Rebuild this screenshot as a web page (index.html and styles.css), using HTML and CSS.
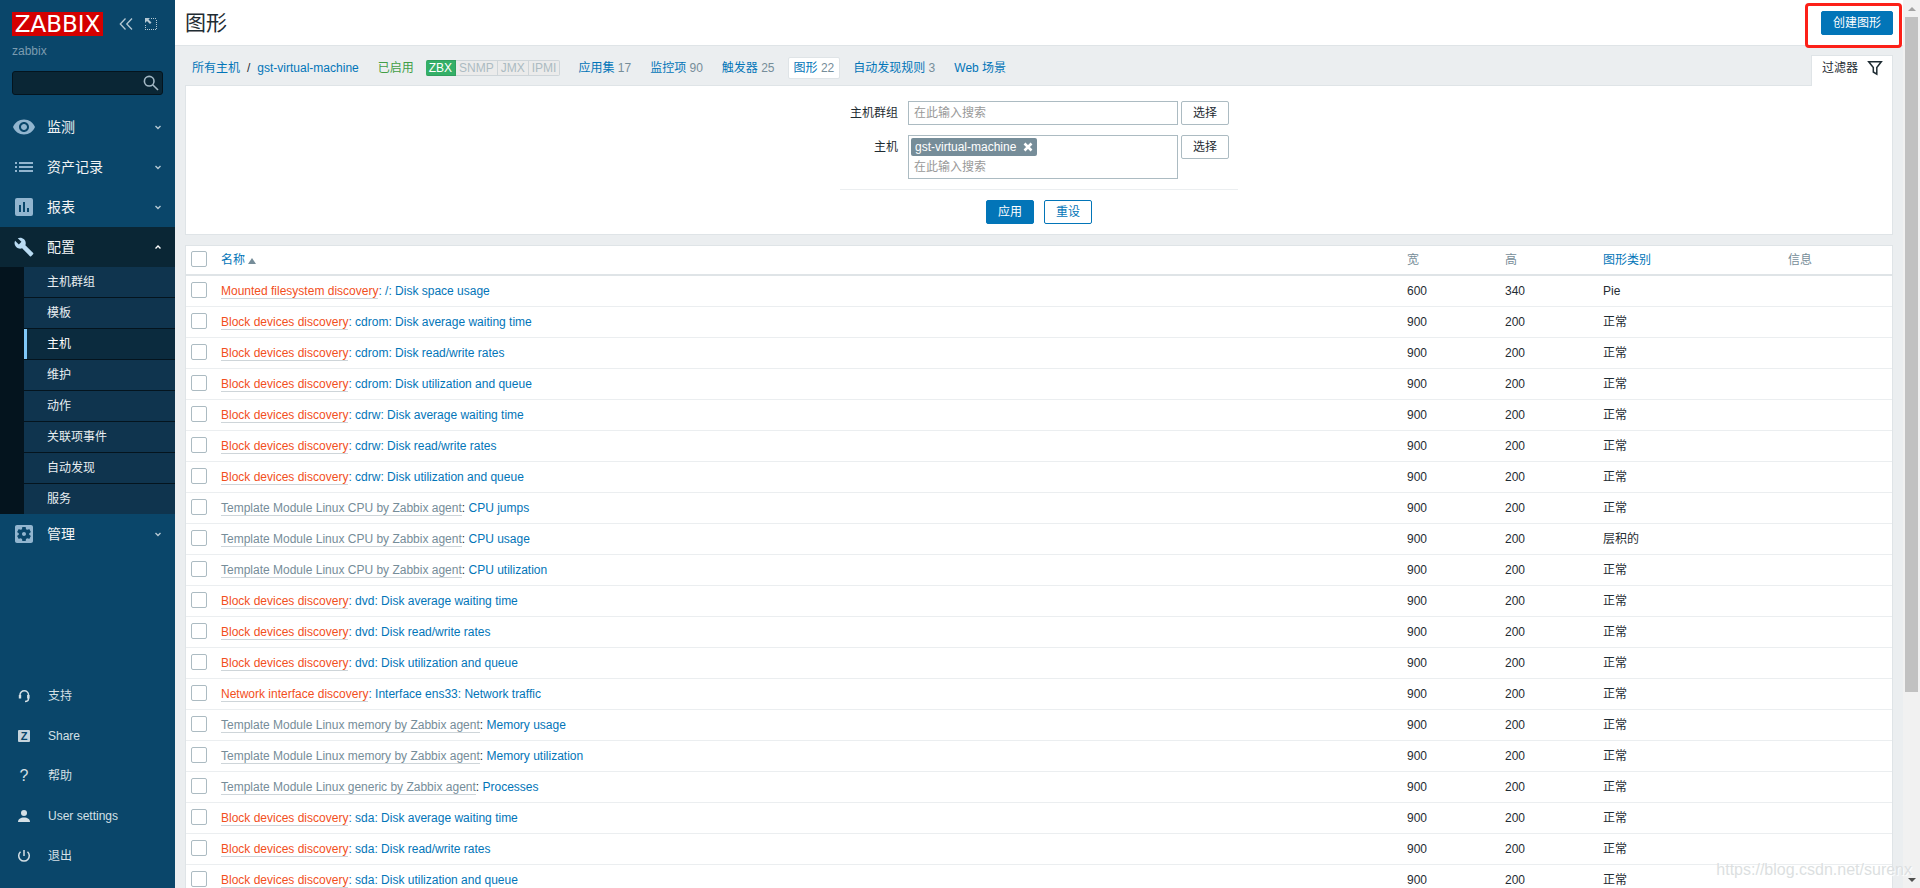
FILE: index.html
```html
<!DOCTYPE html>
<html lang="zh-CN">
<head>
<meta charset="utf-8">
<title>图形</title>
<link rel="stylesheet" href="styles.css">
</head>
<body>
<aside class="sidebar">
  <div class="brand">
    <a class="logo" href="#">ZABBIX</a>
    <button class="icon-btn" type="button" aria-label="收起侧边栏"><svg width="16" height="16" viewBox="0 0 16 16" fill="none" stroke="currentColor" stroke-width="1.3"><path d="M7.500 2.500 2.300 8l5.200 5.500M14 2.500 8.800 8l5.200 5.500"/></svg></button>
    <button class="icon-btn" type="button" aria-label="隐藏侧边栏"><svg width="14" height="14" viewBox="0 0 14 14" fill="none" stroke="currentColor"><path d="M7 1.500h6M12.500 3v10M1.500 8v5M1 12.500h12" stroke-dasharray="1 1"/><path d="M1 1h5L4.500 2.500l3 3-1.500 1.500-3-3L1 6z" fill="currentColor" stroke="none"/></svg></button>
  </div>
  <div class="server">zabbix</div>
  <form class="search">
    <input type="text" aria-label="搜索">
    <button type="button" aria-label="搜索"><svg width="16" height="16" viewBox="0 0 16 16" fill="none" stroke="currentColor" stroke-width="1.600"><circle cx="6.200" cy="6.200" r="4.800"/><path d="m9.700 9.700 5.300 5.300"/></svg></button>
  </form>
  <nav class="menu">
    <a class="menu-item" href="#"><svg class="menu-icon" viewBox="0 0 24 24"><path d="M12 4.500C7 4.500 2.730 7.610 1 12c1.730 4.390 6 7.500 11 7.500s9.270-3.110 11-7.500c-1.730-4.390-6-7.500-11-7.500zM12 17c-2.760 0-5-2.240-5-5s2.240-5 5-5 5 2.240 5 5-2.240 5-5 5zm0-8c-1.660 0-3 1.340-3 3s1.340 3 3 3 3-1.340 3-3-1.340-3-3-3z"/></svg><span>监测</span><svg class="chevron" viewBox="0 0 8 8"><path d="M1.500 3 4 5.500 6.500 3"/></svg></a>
    <a class="menu-item" href="#"><svg class="menu-icon" viewBox="0 0 24 24"><path d="M3 7h2v2H3zm4 0h14v2H7zM3 11h2v2H3zm4 0h14v2H7zM3 15h2v2H3zm4 0h14v2H7z"/></svg><span>资产记录</span><svg class="chevron" viewBox="0 0 8 8"><path d="M1.500 3 4 5.500 6.500 3"/></svg></a>
    <a class="menu-item" href="#"><svg class="menu-icon" viewBox="0 0 24 24"><path d="M19 3H5a2 2 0 0 0-2 2v14a2 2 0 0 0 2 2h14a2 2 0 0 0 2-2V5a2 2 0 0 0-2-2zM9 17H7v-7h2zm4 0h-2V7h2zm4 0h-2v-4h2z"/></svg><span>报表</span><svg class="chevron" viewBox="0 0 8 8"><path d="M1.500 3 4 5.500 6.500 3"/></svg></a>
    <a class="menu-item open" href="#"><svg class="menu-icon" viewBox="-2 -2 28 28"><path d="M22.700 19l-9.100-9.100c.9-2.300.4-5-1.500-6.900-2-2-5-2.400-7.400-1.300L9 6 6 9 1.600 4.700C.4 7.100.9 10.100 2.900 12.100c1.900 1.900 4.600 2.400 6.900 1.500l9.100 9.100c.4.4 1 .4 1.400 0l2.300-2.300c.5-.4.5-1.100.1-1.400z"/></svg><span>配置</span><svg class="chevron" viewBox="0 0 8 8"><path d="M1.500 5.500 4 3l2.500 2.500"/></svg></a>
    <div class="submenu">
      <a href="#">主机群组</a>
      <a href="#">模板</a>
      <a class="selected" href="#">主机</a>
      <a href="#">维护</a>
      <a href="#">动作</a>
      <a href="#">关联项事件</a>
      <a href="#">自动发现</a>
      <a href="#">服务</a>
    </div>
    <a class="menu-item" href="#"><svg class="menu-icon" viewBox="0 0 24 24"><path d="M12 10c-1.100 0-2 .9-2 2s.9 2 2 2 2-.9 2-2-.9-2-2-2zm7-7H5c-1.110 0-2 .9-2 2v14c0 1.100.89 2 2 2h14c1.110 0 2-.9 2-2V5c0-1.100-.89-2-2-2zm-1.750 9c0 .23-.02.46-.05.68l1.480 1.160c.13.11.17.3.08.45l-1.400 2.420c-.09.15-.27.21-.43.15l-1.740-.7c-.36.28-.76.51-1.180.69l-.26 1.850c-.03.17-.18.3-.35.3h-2.800c-.17 0-.32-.13-.35-.29l-.26-1.850c-.43-.18-.82-.41-1.180-.69l-1.740.7c-.16.06-.34 0-.43-.15l-1.400-2.420c-.09-.15-.05-.34.08-.45l1.480-1.160c-.03-.23-.05-.46-.05-.69 0-.23.02-.46.05-.68l-1.480-1.160c-.13-.11-.17-.3-.08-.45l1.400-2.420c.09-.15.27-.21.43-.15l1.740.7c.36-.28.76-.51 1.180-.69l.26-1.850c.03-.17.18-.3.35-.3h2.800c.17 0 .32.13.35.29l.26 1.850c.43.18.82.41 1.180.69l1.740-.7c.16-.06.34 0 .43.15l1.400 2.420c.09.15.05.34-.08.45l-1.480 1.160c.03.23.05.46.05.69z"/></svg><span>管理</span><svg class="chevron" viewBox="0 0 8 8"><path d="M1.500 3 4 5.500 6.500 3"/></svg></a>
  </nav>
  <nav class="user-menu">
    <a href="#"><svg viewBox="0 0 14 14" fill="none" stroke="currentColor" stroke-width="1.500"><path d="M3 9V6a4 4 0 0 1 8.500 0v3.500c0 2-1 3-3.500 3"/><path d="M3 6v3.500M11.300 6v3.500" stroke-width="2.400"/></svg><span>支持</span></a>
    <a href="#"><b class="z-badge">Z</b><span>Share</span></a>
    <a href="#"><span class="question">?</span><span>帮助</span></a>
    <a href="#"><svg viewBox="0 0 14 14" fill="currentColor"><circle cx="7" cy="4" r="3"/><path d="M1 13c0-3 2.500-4.500 6-4.500s6 1.500 6 4.500z"/></svg><span>User settings</span></a>
    <a href="#"><svg viewBox="0 0 14 14" fill="none" stroke="currentColor" stroke-width="1.500"><path d="M7 1v6M3.500 2.800a5.300 5.300 0 1 0 7 0"/></svg><span>退出</span></a>
  </nav>
</aside>

<main class="page">
  <header class="page-head">
    <h1>图形</h1>
    <div class="create-wrap"><button class="btn primary" type="button">创建图形</button></div>
  </header>
  <div class="content">
    <div class="nav-row">
      <nav class="crumbs">
        <a href="#">所有主机</a><span class="slash">/</span><a href="#">gst-virtual-machine</a>
        <span class="enabled">已启用</span>
        <span class="interfaces"><span class="on">ZBX</span><span>SNMP</span><span>JMX</span><span>IPMI</span></span>
        <span class="tabs">
          <a href="#">应用集 <sup>17</sup></a>
          <a href="#">监控项 <sup>90</sup></a>
          <a href="#">触发器 <sup>25</sup></a>
          <a class="current" href="#">图形 <sup>22</sup></a>
          <a href="#">自动发现规则 <sup>3</sup></a>
          <a href="#">Web 场景</a>
        </span>
      </nav>
      <button class="filter-tab" type="button">过滤器<svg width="16" height="16" viewBox="0 0 16 16" fill="none" stroke="currentColor" stroke-width="1.500"><path d="M1.700 1.800h12.600L9.800 7.500v6.700L6.300 12V7.500z"/></svg></button>
    </div>
    <form class="filter">
      <div class="fields">
        <div class="field">
          <label for="groups">主机群组</label>
          <div class="multiselect"><input id="groups" type="text" placeholder="在此输入搜索"></div>
          <button class="btn plain" type="button">选择</button>
        </div>
        <div class="field">
          <label for="hosts">主机</label>
          <div class="multiselect">
            <span class="tag">gst-virtual-machine<button type="button" aria-label="移除"><svg width="10" height="10" viewBox="0 0 10 10" stroke="currentColor" stroke-width="2.600"><path d="m1.500 1.500 7 7m0-7-7 7"/></svg></button></span>
            <input id="hosts" type="text" placeholder="在此输入搜索">
          </div>
          <button class="btn plain" type="button">选择</button>
        </div>
      </div>
      <div class="actions">
        <button class="btn primary" type="button">应用</button>
        <button class="btn outline" type="button">重设</button>
      </div>
    </form>
    <table class="list">
      <colgroup><col class="c-check"><col><col class="c-num"><col class="c-num"><col class="c-type"><col class="c-info"></colgroup>
      <thead><tr><th><input type="checkbox" aria-label="全选"></th><th><a href="#">名称<i class="sort"></i></a></th><th>宽</th><th>高</th><th><a href="#">图形类别</a></th><th>信息</th></tr></thead>
      <tbody>
        <tr><td><input type="checkbox" aria-label="选择"></td><td><a class="rule" href="#">Mounted filesystem discovery</a><a href="#">: /: Disk space usage</a></td><td>600</td><td>340</td><td>Pie</td><td></td></tr>
        <tr><td><input type="checkbox" aria-label="选择"></td><td><a class="rule" href="#">Block devices discovery</a><a href="#">: cdrom: Disk average waiting time</a></td><td>900</td><td>200</td><td>正常</td><td></td></tr>
        <tr><td><input type="checkbox" aria-label="选择"></td><td><a class="rule" href="#">Block devices discovery</a><a href="#">: cdrom: Disk read/write rates</a></td><td>900</td><td>200</td><td>正常</td><td></td></tr>
        <tr><td><input type="checkbox" aria-label="选择"></td><td><a class="rule" href="#">Block devices discovery</a><a href="#">: cdrom: Disk utilization and queue</a></td><td>900</td><td>200</td><td>正常</td><td></td></tr>
        <tr><td><input type="checkbox" aria-label="选择"></td><td><a class="rule" href="#">Block devices discovery</a><a href="#">: cdrw: Disk average waiting time</a></td><td>900</td><td>200</td><td>正常</td><td></td></tr>
        <tr><td><input type="checkbox" aria-label="选择"></td><td><a class="rule" href="#">Block devices discovery</a><a href="#">: cdrw: Disk read/write rates</a></td><td>900</td><td>200</td><td>正常</td><td></td></tr>
        <tr><td><input type="checkbox" aria-label="选择"></td><td><a class="rule" href="#">Block devices discovery</a><a href="#">: cdrw: Disk utilization and queue</a></td><td>900</td><td>200</td><td>正常</td><td></td></tr>
        <tr><td><input type="checkbox" aria-label="选择"></td><td><a class="template" href="#">Template Module Linux CPU by Zabbix agent</a>: <a href="#">CPU jumps</a></td><td>900</td><td>200</td><td>正常</td><td></td></tr>
        <tr><td><input type="checkbox" aria-label="选择"></td><td><a class="template" href="#">Template Module Linux CPU by Zabbix agent</a>: <a href="#">CPU usage</a></td><td>900</td><td>200</td><td>层积的</td><td></td></tr>
        <tr><td><input type="checkbox" aria-label="选择"></td><td><a class="template" href="#">Template Module Linux CPU by Zabbix agent</a>: <a href="#">CPU utilization</a></td><td>900</td><td>200</td><td>正常</td><td></td></tr>
        <tr><td><input type="checkbox" aria-label="选择"></td><td><a class="rule" href="#">Block devices discovery</a><a href="#">: dvd: Disk average waiting time</a></td><td>900</td><td>200</td><td>正常</td><td></td></tr>
        <tr><td><input type="checkbox" aria-label="选择"></td><td><a class="rule" href="#">Block devices discovery</a><a href="#">: dvd: Disk read/write rates</a></td><td>900</td><td>200</td><td>正常</td><td></td></tr>
        <tr><td><input type="checkbox" aria-label="选择"></td><td><a class="rule" href="#">Block devices discovery</a><a href="#">: dvd: Disk utilization and queue</a></td><td>900</td><td>200</td><td>正常</td><td></td></tr>
        <tr><td><input type="checkbox" aria-label="选择"></td><td><a class="rule" href="#">Network interface discovery</a><a href="#">: Interface ens33: Network traffic</a></td><td>900</td><td>200</td><td>正常</td><td></td></tr>
        <tr><td><input type="checkbox" aria-label="选择"></td><td><a class="template" href="#">Template Module Linux memory by Zabbix agent</a>: <a href="#">Memory usage</a></td><td>900</td><td>200</td><td>正常</td><td></td></tr>
        <tr><td><input type="checkbox" aria-label="选择"></td><td><a class="template" href="#">Template Module Linux memory by Zabbix agent</a>: <a href="#">Memory utilization</a></td><td>900</td><td>200</td><td>正常</td><td></td></tr>
        <tr><td><input type="checkbox" aria-label="选择"></td><td><a class="template" href="#">Template Module Linux generic by Zabbix agent</a>: <a href="#">Processes</a></td><td>900</td><td>200</td><td>正常</td><td></td></tr>
        <tr><td><input type="checkbox" aria-label="选择"></td><td><a class="rule" href="#">Block devices discovery</a><a href="#">: sda: Disk average waiting time</a></td><td>900</td><td>200</td><td>正常</td><td></td></tr>
        <tr><td><input type="checkbox" aria-label="选择"></td><td><a class="rule" href="#">Block devices discovery</a><a href="#">: sda: Disk read/write rates</a></td><td>900</td><td>200</td><td>正常</td><td></td></tr>
        <tr><td><input type="checkbox" aria-label="选择"></td><td><a class="rule" href="#">Block devices discovery</a><a href="#">: sda: Disk utilization and queue</a></td><td>900</td><td>200</td><td>正常</td><td></td></tr>
      </tbody>
    </table>
  </div>
</main>

<div class="scrollbar" aria-hidden="true">
  <i class="arrow up"></i>
  <div class="track"><div class="thumb"></div></div>
  <i class="arrow down"></i>
</div>
<div class="watermark">https://blog.csdn.net/surenx</div>
</body>
</html>
```
FILE: styles.css
```css
* { box-sizing: border-box; }

body {
  margin: 0;
  height: 100vh;
  overflow: hidden;
  display: flex;
  background: #ebeef0;
  color: #1f2c33;
  font: 12px/16px "Liberation Sans", "Noto Sans CJK SC", sans-serif;
}

a { color: #0275b8; text-decoration: none; }
button, input { font: inherit; color: inherit; }
button { cursor: pointer; }
svg { display: block; flex: none; }

/* Sidebar */
.sidebar {
  flex: none;
  width: 175px;
  display: flex;
  flex-direction: column;
  background: #0a466a;
  color: #d5e0e6;
}
.sidebar a { color: inherit; }
.brand {
  display: flex;
  align-items: center;
  gap: 10px;
  padding: 12px 12px 0;
}
.sidebar .logo {
  width: 91px;
  height: 24px;
  margin-right: 5px;
  background: #d40000;
  color: #fff;
  font: 23px/24px "DejaVu Sans", sans-serif;
  text-align: center;
}
.icon-btn {
  display: flex;
  padding: 0;
  border: 0;
  background: none;
  color: #b5c8d3;
}
.server { padding: 7px 12px 0; color: #7c9cb0; }
.search {
  display: flex;
  align-items: center;
  height: 24px;
  margin: 12px;
  padding-right: 3px;
  border: 1px solid #04141e;
  border-radius: 3px;
  background: #0a2635;
}
.search input {
  flex: 1;
  min-width: 0;
  border: 0;
  background: none;
  outline: 0;
}
.search button {
  padding: 0;
  border: 0;
  background: none;
  color: #a3b8c5;
}
.menu-item {
  display: flex;
  align-items: center;
  height: 40px;
  padding: 0 13px 0 12px;
  font-size: 14px;
}
.menu .menu-item { color: #f2f4f5; }
.menu-icon {
  width: 24px;
  height: 24px;
  margin-right: 11px;
  fill: #92b5cf;
}
.menu-item span { flex: 1; }
.chevron {
  width: 8px;
  height: 8px;
  fill: none;
  stroke: #b5c8d3;
  stroke-width: 1.4;
}
.menu-item.open { background: #0a2635; }
.open .menu-icon { fill: #b9dbf3; }
.open .chevron { stroke: #fff; }
.submenu {
  display: grid;
  gap: 1px;
  padding-left: 24px;
  background: #04141e;
}
.submenu a {
  height: 30px;
  padding-left: 20px;
  border-left: 3px solid #0f344e;
  background: #0f344e;
  color: #e8eef1;
  line-height: 30px;
}
.submenu .selected {
  border-left-color: #80c8f8;
  background: #0b2b3e;
  color: #fff;
}
.user-menu { margin: auto 0 12px; }
.user-menu a {
  display: flex;
  align-items: center;
  height: 40px;
  padding-left: 17px;
  gap: 17px;
}
.user-menu svg { width: 14px; height: 14px; }
.z-badge {
  width: 12px;
  height: 12px;
  margin: 0 1px;
  border-radius: 1px;
  background: #c5d4dd;
  color: #0a466a;
  font-size: 11px;
  line-height: 12px;
  text-align: center;
}
.question {
  width: 14px;
  font-size: 16px;
  text-align: center;
}

/* Page */
.page { flex: 1; min-width: 0; }
.page-head {
  display: flex;
  align-items: center;
  justify-content: space-between;
  height: 46px;
  padding: 0 10px;
  border-bottom: 1px solid #dfe4e7;
  background: #fff;
}
h1 { margin: 0; font-size: 21px; line-height: 28px; font-weight: 400; }
.create-wrap { position: relative; }
.create-wrap::after {
  content: "";
  position: absolute;
  inset: -8px -9px -13px -16px;
  border: 3px solid #fc2018;
  border-radius: 4px;
  pointer-events: none;
}
.btn {
  height: 24px;
  min-width: 48px;
  padding: 0 11px;
  border: 1px solid #0275b8;
  border-radius: 2px;
  line-height: 22px;
}
.primary { background: #0275b8; color: #fff; }
.outline { background: #fff; color: #0275b8; }
.plain { border-color: #acbbc2; background: #fff; }

.content { padding: 0 10px; }
.nav-row {
  display: flex;
  justify-content: space-between;
  align-items: flex-end;
  height: 39px;
}
.crumbs {
  display: flex;
  align-items: center;
  height: 39px;
  padding: 4px 0 0 7px;
  white-space: nowrap;
}
.slash { padding: 0 7px; }
.enabled { margin: 0 12px 0 19px; color: #429e47; }
.interfaces { display: flex; line-height: 14px; }
.interfaces span {
  padding: 0 3px;
  border: 1px solid #ced5d9;
  border-left-width: 0;
  background: #ebebeb;
  color: #acbbc2;
}
.interfaces span:last-child { border-radius: 0 2px 2px 0; }
.interfaces .on {
  border-color: #2f9f5e;
  border-radius: 2px 0 0 2px;
  background: #34af67;
  color: #fff;
}
.tabs { display: flex; gap: 7px; margin-left: 12px; }
.tabs a {
  padding: 2px 5px;
  border: 1px solid transparent;
  border-radius: 2px;
}
.tabs .current { border-color: #dfe4e7; background: #fff; }
.tabs sup { color: #768d99; font-size: 12px; line-height: 16px; vertical-align: baseline; }
.filter-tab {
  position: relative;
  display: flex;
  align-items: center;
  gap: 9px;
  height: 31px;
  margin-bottom: -1px;
  padding: 0 9px 6px 10px;
  border: 1px solid #dfe4e7;
  border-bottom: 0;
  background: #fff;
}

.filter {
  padding: 15px 0 10px;
  border: 1px solid #dfe4e7;
  background: #fff;
}
.fields {
  display: grid;
  gap: 10px;
  width: 398px;
  margin: 0 auto;
  padding-bottom: 10px;
  border-bottom: 1px solid #ebeef0;
}
.field {
  display: flex;
  gap: 3px;
  align-items: flex-start;
}
.field label { width: 58px; margin-right: 7px; padding-top: 4px; text-align: right; }
.multiselect {
  width: 270px;
  min-height: 24px;
  padding: 2px;
  border: 1px solid #acbbc2;
  background: #fff;
}
.multiselect input {
  display: block;
  width: 100%;
  height: 18px;
  padding: 0 3px;
  border: 0;
  outline: 0;
}
.multiselect input::placeholder { color: #999; }
.tag {
  display: flex;
  align-items: center;
  gap: 7px;
  width: fit-content;
  height: 18px;
  margin-bottom: 2px;
  padding: 0 4px;
  border-radius: 2px;
  background: #768d99;
  color: #fff;
}
.tag button { padding: 0; border: 0; background: none; }
.actions { display: flex; justify-content: center; gap: 10px; padding-top: 10px; }

/* Graph list */
.list {
  width: 100%;
  margin-top: 10px;
  border: 1px solid #dfe4e7;
  border-collapse: separate;
  border-spacing: 0;
  table-layout: fixed;
  background: #fff;
}
.c-check { width: 30px; }
.c-num { width: 98px; }
.c-type { width: 185px; }
.c-info { width: 109px; }
.list th, .list td {
  height: 31px;
  padding: 0 5px;
  border-bottom: 1px solid #ebeef0;
  font-weight: 400;
  text-align: left;
  white-space: nowrap;
}
.list th {
  height: 30px;
  border-bottom: 2px solid #dfe4e7;
  color: #768d99;
}
.list input {
  appearance: none;
  display: block;
  width: 16px;
  height: 16px;
  margin: 0 0 2px;
  border: 1px solid #acbbc2;
  border-radius: 2px;
  background: #fff;
}
.sort {
  display: inline-block;
  margin-left: 3px;
  border: 4px solid transparent;
  border-top: 0;
  border-bottom: 6px solid #768d99;
}
.list .rule { color: #f24f1d; border-bottom: 1px solid #ced5d9; }
.list .template { color: #768d99; border-bottom: 1px solid #ced5d9; }

/* Scrollbar */
.scrollbar {
  flex: none;
  width: 17px;
  display: flex;
  flex-direction: column;
  align-items: center;
  background: #f1f1f1;
}
.track { flex: 1; width: 13px; }
.thumb { height: 79%; background: #c1c1c1; }
.arrow { margin: 7px 0 6px; border: 4px solid transparent; }
.up { border-top: 0; border-bottom-color: #a3a3a3; }
.down { border-bottom: 0; border-top-color: #505050; }

.watermark {
  position: absolute;
  right: 8px;
  bottom: 8px;
  color: #dcdfe1;
  font-size: 16px;
  line-height: 20px;
  text-shadow: 1px 1px 1px #fff;
}
```
